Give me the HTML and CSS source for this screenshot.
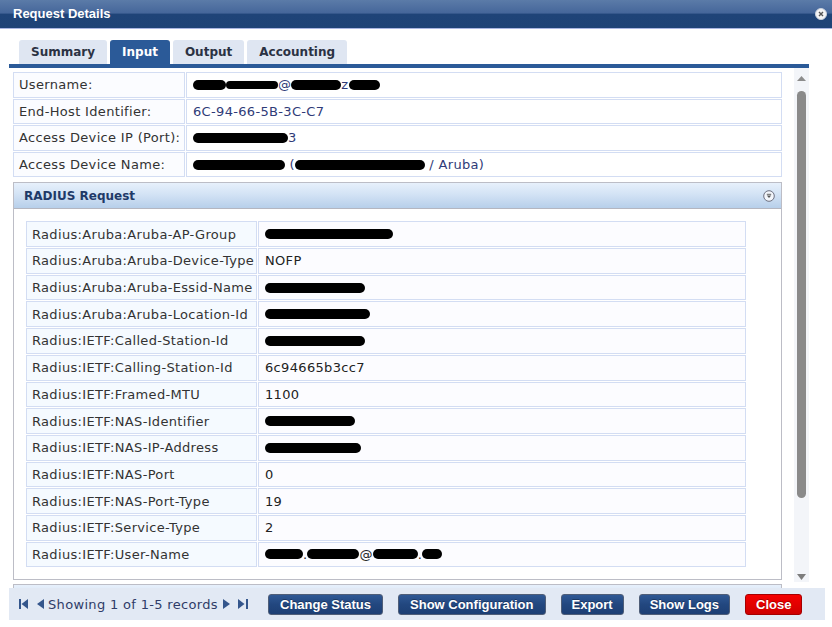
FILE: index.html
```html
<!DOCTYPE html>
<html>
<head>
<meta charset="utf-8">
<title>Request Details</title>
<link rel="stylesheet" href="styles.css">
</head>
<body>
<div class="dialog">
  <div class="titlebar">
    <span class="title">Request Details</span>
    <svg class="close-x" width="12" height="12" viewBox="0 0 12 12"><circle cx="6" cy="6" r="5.5" fill="#f4f4f4" stroke="#c9d0dc" stroke-width="1"/><path d="M4 4 L8 8 M8 4 L4 8" stroke="#555" stroke-width="1.4"/></svg>
  </div>

  <div class="tabs">
    <div class="tab">Summary</div>
    <div class="tab active">Input</div>
    <div class="tab">Output</div>
    <div class="tab">Accounting</div>
  </div>
  <div class="tabline"></div>

  <div class="scroller">
    <div class="content">
      <div class="kv top">
        <div class="k">Username:</div>
        <div class="v"><span class="rd w33"></span><span class="rd w52 thin"></span>@<span class="rd w50"></span>z<span class="rd w31"></span></div>
        <div class="k">End-Host Identifier:</div>
        <div class="v">6C-94-66-5B-3C-C7</div>
        <div class="k">Access Device IP (Port):</div>
        <div class="v"><span class="rd w95"></span>3</div>
        <div class="k">Access Device Name:</div>
        <div class="v"><span class="rd w92"></span>&nbsp;(<span class="rd w130"></span>&nbsp;/ Aruba)</div>
      </div>

      <div class="panel">
        <div class="panel-head">
          <span>RADIUS Request</span>
          <svg class="toggle" width="12" height="12" viewBox="0 0 12 12"><circle cx="6" cy="6" r="5.3" fill="#f3f6fb" stroke="#6d7080" stroke-width="1"/><path d="M3.8 4.3 H8.2" stroke="#555" stroke-width="0.9"/><path d="M3.8 5.4 H8.2 L6 8 Z" fill="#555"/></svg>
        </div>
        <div class="panel-body">
          <div class="kv inner">
            <div class="k">Radius:Aruba:Aruba-AP-Group</div><div class="v"><span class="rd w128"></span></div>
            <div class="k">Radius:Aruba:Aruba-Device-Type</div><div class="v">NOFP</div>
            <div class="k">Radius:Aruba:Aruba-Essid-Name</div><div class="v"><span class="rd w100"></span></div>
            <div class="k">Radius:Aruba:Aruba-Location-Id</div><div class="v"><span class="rd w105"></span></div>
            <div class="k">Radius:IETF:Called-Station-Id</div><div class="v"><span class="rd w100"></span></div>
            <div class="k">Radius:IETF:Calling-Station-Id</div><div class="v">6c94665b3cc7</div>
            <div class="k">Radius:IETF:Framed-MTU</div><div class="v">1100</div>
            <div class="k">Radius:IETF:NAS-Identifier</div><div class="v"><span class="rd w90"></span></div>
            <div class="k">Radius:IETF:NAS-IP-Address</div><div class="v"><span class="rd w96"></span></div>
            <div class="k">Radius:IETF:NAS-Port</div><div class="v">0</div>
            <div class="k">Radius:IETF:NAS-Port-Type</div><div class="v">19</div>
            <div class="k">Radius:IETF:Service-Type</div><div class="v">2</div>
            <div class="k">Radius:IETF:User-Name</div><div class="v"><span class="rd w38"></span>.<span class="rd w52"></span>@<span class="rd w45"></span>.<span class="rd w20"></span></div>
          </div>
        </div>
      </div>

      <div class="panel">
        <div class="panel-head">
          <span></span>
          <svg class="toggle" width="12" height="12" viewBox="0 0 12 12"><circle cx="6" cy="6" r="5.3" fill="#f3f6fb" stroke="#6d7080" stroke-width="1"/><path d="M3.8 4.3 H8.2" stroke="#555" stroke-width="0.9"/><path d="M3.8 5.4 H8.2 L6 8 Z" fill="#555"/></svg>
        </div>
      </div>
    </div>

    <div class="scrollbar">
      <svg class="arrow up" width="9" height="5" viewBox="0 0 9 5"><path d="M0 5 L4.5 0 L9 5 Z" fill="#8c8c8c"/></svg>
      <div class="thumb"></div>
      <svg class="arrow down" width="9" height="6" viewBox="0 0 9 6"><path d="M0 0 L9 0 L4.5 6 Z" fill="#7d7d7d"/></svg>
    </div>
  </div>

  <div class="footer">
    <div class="nav">
      <svg class="first" width="9" height="10" viewBox="0 0 9 10"><rect x="0" y="0" width="2" height="10" fill="#34568c"/><path d="M9 0 L2.5 5 L9 10 Z" fill="#34568c"/></svg>
      <svg class="prev" width="7" height="10" viewBox="0 0 7 10"><path d="M7 0 L0 5 L7 10 Z" fill="#34568c"/></svg>
      <span class="nav-text">Showing 1 of 1-5 records</span>
      <svg class="next" width="7" height="10" viewBox="0 0 7 10"><path d="M0 0 L7 5 L0 10 Z" fill="#34568c"/></svg>
      <svg class="last" width="10" height="10" viewBox="0 0 10 10"><path d="M0 0 L6.5 5 L0 10 Z" fill="#34568c"/><rect x="8" y="0" width="2" height="10" fill="#34568c"/></svg>
    </div>
    <div class="buttons">
      <button class="btn wide">Change Status</button>
      <button class="btn wide">Show Configuration</button>
      <button class="btn">Export</button>
      <button class="btn">Show Logs</button>
      <button class="btn red">Close</button>
    </div>
  </div>
</div>
</body>
</html>
```

FILE: styles.css
```css
* { box-sizing: border-box; }

body {
  margin: 0;
  background: #ffffff;
  font-family: "DejaVu Sans", Verdana, sans-serif;
  font-size: 13px;
  letter-spacing: 0.33px;
  color: #333333;
}

.dialog {
  width: 832px;
  height: 627px;
  overflow: hidden;
}

/* Title bar */
.titlebar {
  height: 29px;
  display: flex;
  align-items: center;
  justify-content: space-between;
  padding: 0 5px 1px 13px;
  background: linear-gradient(#5b7ba8 0%, #45669a 47%, #1f4478 50%, #1e4377 100%);
  border-bottom: 1px solid #a9b6e2;
}

.title {
  font-family: "Liberation Sans", Arial, sans-serif;
  font-weight: bold;
  font-size: 13px;
  letter-spacing: 0;
  color: #ffffff;
}

.close-x { display: block; }

/* Tabs */
.tabs {
  display: flex;
  gap: 3px;
  height: 24px;
  margin: 11px 0 0 19px;
}

.tab {
  display: flex;
  align-items: center;
  padding: 0 12px;
  background: #dfe6f2;
  border-radius: 3px 3px 0 0;
  font-weight: bold;
  font-size: 12px;
  letter-spacing: 0;
  color: #2b3243;
}

.tab.active {
  background: #2b5a98;
  color: #ffffff;
}

.tabline {
  margin-left: 9px;
  width: 800px;
  height: 4px;
  background: #2b5a98;
}

/* Scroll area */
.scroller {
  display: flex;
  align-items: flex-start;
  margin-left: 9px;
  width: 800px;
  height: 520px;
}

.content {
  flex: 1;
  height: 520px;
  overflow: hidden;
  padding: 4px 0 0 4px;
}

.scrollbar {
  width: 15px;
  height: 514px;
  background: #f3f5f9;
  display: flex;
  flex-direction: column;
  align-items: center;
  padding-top: 8px;
}

.arrow { display: block; }

.thumb {
  width: 9px;
  height: 407px;
  margin: 10px 0 76px;
  background: #8a8a8a;
  border-radius: 5px;
}

/* Key / value grids */
.kv {
  display: grid;
  gap: 1px;
  grid-auto-rows: 25.6px;
}

.kv.top {
  width: 769px;
  grid-template-columns: 172px 596px;
}

.kv.inner {
  width: 720px;
  grid-template-columns: 231px 488px;
  grid-auto-rows: 25.7px;
}

.kv .k,
.kv .v {
  display: flex;
  align-items: center;
  border: 1px solid #d3ddf3;
  white-space: nowrap;
  overflow: hidden;
}

.kv .k {
  padding: 0 5px;
  color: #333333;
}

.kv .v {
  padding: 0 6px;
}

.kv.top .k { background: #fbfcff; }
.kv.top .v { background: #ffffff; color: #2f3b78; }

.kv.inner .k { background: #f5faff; }
.kv.inner .v { background: #fcfcff; color: #222222; }

/* Redaction marks */
.rd {
  display: inline-block;
  height: 10px;
  background: #000000;
  border-radius: 6px;
}
.rd.thin { height: 8px; }
.w20 { width: 20px; }
.w31 { width: 31px; }
.w33 { width: 33px; }
.w38 { width: 38px; }
.w45 { width: 45px; }
.w50 { width: 50px; }
.w52 { width: 52px; }
.w90 { width: 90px; }
.w92 { width: 92px; }
.w95 { width: 95px; }
.w96 { width: 96px; }
.w100 { width: 100px; }
.w105 { width: 105px; }
.w128 { width: 128px; }
.w130 { width: 130px; }

/* Panels */
.panel {
  width: 769px;
  margin-top: 5px;
  border: 1px solid #bcbdc6;
  background: #ffffff;
}

.panel + .panel { margin-top: 4px; }

.panel-head {
  height: 26px;
  display: flex;
  align-items: center;
  justify-content: space-between;
  padding: 0 6px 0 10px;
  background: linear-gradient(#e7f0fb 0%, #d3e3f5 45%, #b7cfea 100%);
  border-bottom: 1px solid #b4b6c0;
  font-weight: bold;
  font-size: 12px;
  letter-spacing: 0;
  color: #1f3a68;
}

.toggle { display: block; }

.panel-body {
  padding: 12px 0 12px 12px;
}

/* Footer */
.footer {
  margin-left: 9px;
  width: 816px;
  height: 32px;
  display: flex;
  align-items: center;
  padding-left: 10px;
  background: #e2e9f4;
}

.nav {
  width: 249px;
  flex-shrink: 0;
  display: flex;
  align-items: center;
  color: #2f3c68;
}

.nav svg { display: block; flex-shrink: 0; }
.nav .first { margin-right: 9px; }
.nav .prev { margin-right: 4px; }
.nav .next { margin-left: 5px; margin-right: 8px; }

.nav-text {
  flex-shrink: 0;
  white-space: nowrap;
}

.buttons {
  display: flex;
  gap: 15px;
}

.btn {
  height: 21px;
  padding: 0 10px;
  border: 1px solid #4f5e78;
  border-radius: 3px;
  background: linear-gradient(#2f5894 0%, #22477f 50%, #1d3f74 100%);
  font-family: "Liberation Sans", Arial, sans-serif;
  font-weight: bold;
  font-size: 13px;
  letter-spacing: 0;
  color: #ffffff;
  text-shadow: 0 -1px 0 rgba(0, 0, 0, 0.3);
  white-space: nowrap;
}

.btn.wide { padding: 0 11px; }

.btn.red {
  border-color: #a50000;
  background: linear-gradient(#f50000 0%, #e20000 50%, #cf0000 100%);
}
```
